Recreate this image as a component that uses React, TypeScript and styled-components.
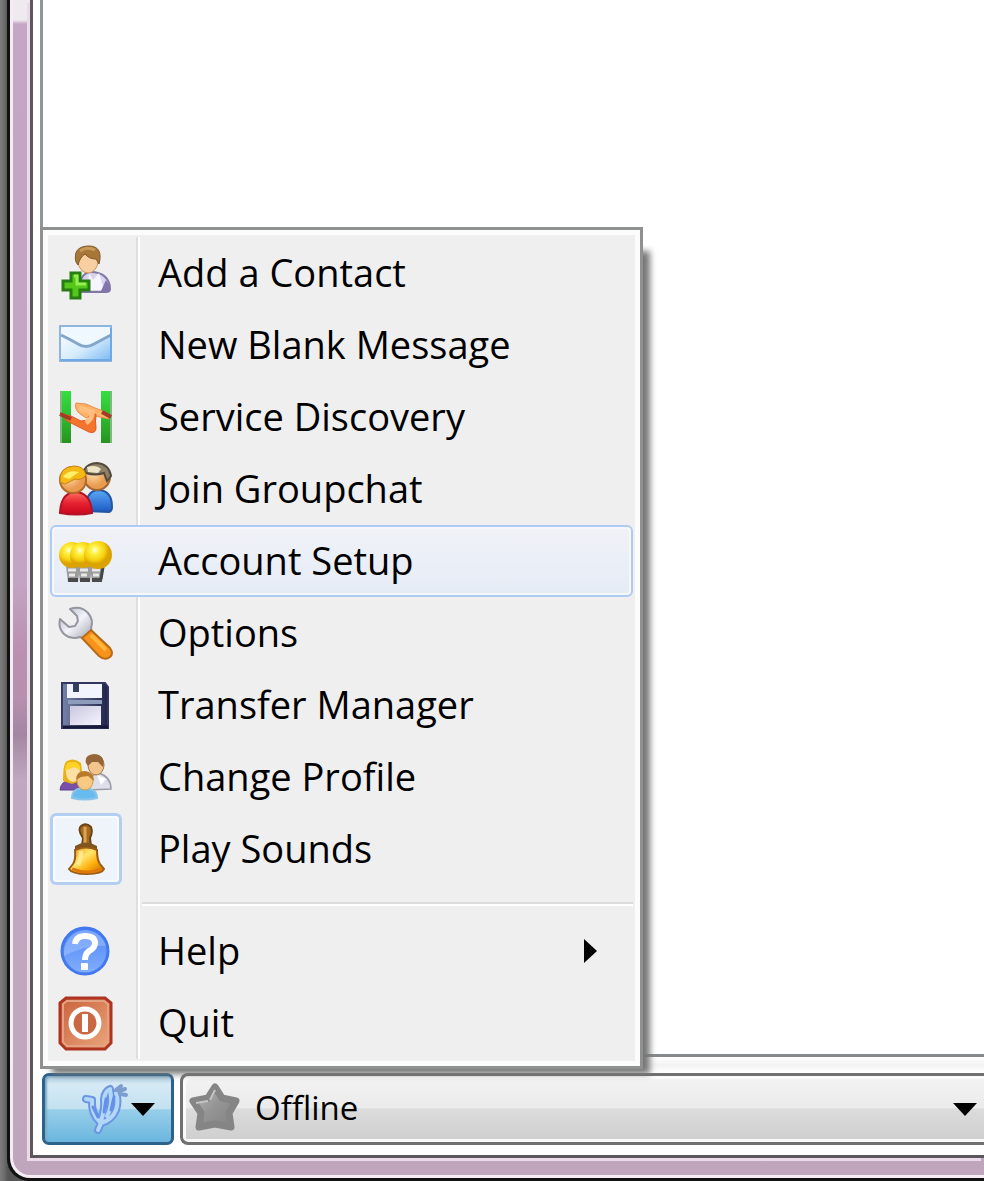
import React from 'react';
import styled, { createGlobalStyle } from 'styled-components';

const GlobalStyle = createGlobalStyle`
  * { box-sizing: border-box; }
  body { margin: 0; background: #777; overflow: hidden; }
  button, select, input { font: inherit; color: inherit; margin: 0; }
`;

const Desktop = styled.div`
  display: flex;
  min-height: 100vh;
  padding-left: 7px;
  background: linear-gradient(90deg, #7c7c7c 0, #6e6e6e 4px, #555 8px);
  font-family: 'Open Sans', 'Noto Sans', sans-serif;
  color: #000;
`;

const WindowEdge = styled.div`
  display: flex;
  flex: 1;
  min-width: 0;
  padding: 0 0 3px 3px;
  background: #111;
  border-bottom-left-radius: 22px;
`;

const WindowGlass = styled.div`
  display: flex;
  flex: 1;
  min-width: 0;
  border-left: 3px solid #f6ecf5;
  border-bottom: 3px solid #f6ecf5;
  border-bottom-left-radius: 20px;
  padding: 0 0 17px 17px;
  background:
    linear-gradient(180deg, #efe9f0 0, #efe9f0 20px, transparent 24px),
    linear-gradient(180deg, #c3a7c5 0, #c3a5c3 580px, #bb90b0 650px, #b690ae 700px, #a387a2 734px, #c0a8c0 780px, #c0a6bd 100%);
`;

const WindowBody = styled.div`
  display: flex;
  flex: 1;
  flex-direction: column;
  min-width: 0;
  border-left: 3px solid #5c575d;
  border-bottom: 3px solid #5c575d;
  padding-left: 9px;
  background: #fff;
  box-shadow: -3px 3px 0 #eadbea;
`;

const Roster = styled.main`
  flex: 1;
  border-left: 3px solid #909598;
  border-bottom: 3px solid #85898c;
  margin-left: -2px;
  background: #fff;
`;

const BottomBar = styled.footer`
  position: relative;
  display: flex;
  gap: 6px;
  padding: 16px 0 10px;
  background: linear-gradient(180deg, #fff 0, #f3f3f3 8px, #fff 16px);
`;

const MainButton = styled.button`
  display: flex;
  align-items: center;
  justify-content: flex-end;
  gap: 2px;
  width: 132px;
  height: 72px;
  padding: 0 16px 0 0;
  border: 3px solid #2d628a;
  border-radius: 7px;
  background: linear-gradient(180deg, #a5c4d8 0, #d6eaf5 8px, #c3e1f0 50%, #98cfea 51%, #6bb6df 100%);
  box-shadow: inset 2px 1px 2px #7fabc6;
`;

const StatusBox = styled.div`
  display: grid;
  flex: 1;
  align-items: center;
  min-width: 0;
  & > * { grid-area: 1 / 1; }
  & > svg { pointer-events: none; }
`;

const StatusSelect = styled.select`
  appearance: none;
  width: 100%;
  height: 72px;
  padding: 0 40px 2px 72px;
  border: 3px solid #707070;
  border-right: 0;
  border-radius: 8px 0 0 8px;
  background: linear-gradient(180deg, #f3f3f3 0, #ebebeb 48%, #dcdcdc 50%, #cecece 100%);
  box-shadow: inset 3px 3px 0 #fbfbfb, inset 0 -3px 0 #f8f8f8;
  font-size: 33px;
  line-height: 40px;
`;

const StatusIcon = styled.svg`
  width: 54px;
  height: 54px;
  margin-left: 8px;
`;

const StatusArrow = styled.svg`
  width: 24px;
  height: 13px;
  justify-self: end;
  margin-right: 7px;
`;

const MenuPopup = styled.div`
  position: absolute;
  z-index: 1;
  left: -2px;
  bottom: calc(100% - 12px);
  width: 603px;
  &::before {
    content: '';
    position: absolute;
    inset: 24px -7px -5px 12px;
    background: #777;
    filter: blur(3px);
  }
`;

const MenuPanel = styled.div`
  position: relative;
  display: flex;
  flex-direction: column;
  padding: 7px;
  border: 3px solid #8f9190;
  background: #efefef;
  box-shadow: inset 0 0 0 5px #fcfcfc;
`;

const rowBox = `
  display: grid;
  grid-template-columns: 72px 1fr auto;
  column-gap: 36px;
  align-items: center;
  height: 72px;
  padding: 0 36px 0 0;
  border: 0;
  text-align: left;
  font-size: 38px;
  line-height: 48px;
  white-space: nowrap;
`;

const MenuItem = styled.button<{ $active?: boolean }>`
  ${rowBox}
  border-radius: 6px;
  background: ${p => (p.$active ? 'linear-gradient(180deg, #f0f2f7, #e5ebf6)' : 'transparent')};
  box-shadow: ${p => (p.$active ? 'inset 0 0 0 2px #aecbf2, inset 0 0 0 4px #f4f7fc' : 'none')};
`;

const CheckItem = styled.label`
  ${rowBox}
`;

const Caption = styled.span`
  padding-bottom: 2px;
`;

const IconCell = styled.span`
  display: grid;
  place-items: center;
  & > * { grid-area: 1 / 1; }
`;

const Tick = styled.input`
  appearance: none;
  width: 72px;
  height: 72px;
  border-radius: 6px;
  &:checked {
    background: #eff3fa;
    box-shadow: inset 0 0 0 3px #b3cef1, inset 0 0 0 5px #f7faff;
  }
`;

const Glyph = styled.svg`
  width: 54px;
  height: 54px;
  overflow: visible;
  pointer-events: none;
`;

const Items = styled.div`
  display: flex;
  flex-direction: column;
  background: linear-gradient(90deg, #dedede 50%, #fff 50%) 86px 0 / 4px 100% no-repeat;
`;

const Divider = styled.hr`
  width: calc(100% - 92px);
  height: 4px;
  margin: 17px 0 9px 92px;
  border: 0;
  border-top: 2px solid #dcdcdc;
  background: #fff;
`;

const AddContact = () => (
  <Glyph viewBox="0 0 54 54">
    <path d="M20 44C20 33 25 26 32 26C43 26 51 32 51 43Q51 46 47 46H20Z" fill="#d9d3ee" stroke="#8278a8" strokeWidth="2" />
    <path d="M30 27L34 34L40 27L45 44H29Z" fill="#f6f4ff" />
    <path d="M47 34Q52 40 50 45H42Z" fill="#8175ac" />
    <ellipse cx="29" cy="15" rx="10" ry="12" fill="#f8cfa0" stroke="#c99560" />
    <path d="M17 16C14 4 21 0 30 0C40 0 43 7 40 18L37 13Q30 13 26 8Q21 11 19 19Z" fill="#a87639" stroke="#80572a" />
    <path d="M21 5Q28 0 36 4" fill="none" stroke="#c99a59" strokeWidth="3" />
    <path d="M12 27H21V35H30V44H21V52H12V44H4V35H12Z" fill="#54c719" stroke="#267d12" strokeWidth="3" />
    <path d="M15 30H18V38H27" fill="none" stroke="#96ee55" strokeWidth="3" />
  </Glyph>
);
const Message = () => (
  <Glyph viewBox="0 0 54 54">
    <defs><linearGradient id="mail" x2="1" y2="1"><stop stopColor="#fff" /><stop offset=".55" stopColor="#d6ecfd" /><stop offset="1" stopColor="#79b8f2" /></linearGradient></defs>
    <rect x="1" y="8" width="51" height="35" fill="url(#mail)" stroke="#8eb4df" strokeWidth="2" />
    <path d="M2 9H51V16L35 25Q27 30 19 25L2 16Z" fill="#f0f8ff" />
    <path d="M2 17Q14 23 19 26Q27 31 35 26L52 17" fill="none" stroke="#82a5cc" strokeWidth="3" />
    <path d="M2 42H52V10" fill="none" stroke="#6ea8e5" strokeWidth="2" />
  </Glyph>
);
const Discovery = () => (
  <Glyph viewBox="0 0 54 54">
    <defs><linearGradient id="pole" x2="0" y2="1"><stop stopColor="#35e040" /><stop offset="1" stopColor="#26941f" /></linearGradient></defs>
    <path d="M1 1H12V53H1ZM42 1H53V53H42Z" fill="url(#pole)" />
    <path d="M2 1V53M52 1V53" stroke="#82b783" strokeWidth="2" />
    <path d="M17 13L27 14L36 18L44 21L51 25L50 29L41 27L36 26L27 28L20 23Q15 18 17 13Z" fill="#ffb268" stroke="#f08b45" />
    <path d="M1 23L12 26L22 31L29 30L30 26L37 24Q36 31 37 38Q37 44 30 42L20 37L8 31Z" fill="#f4742c" stroke="#dd5a22" />
    <path d="M20 18L33 22Q34 28 27 33" fill="none" stroke="#ffbd7e" strokeWidth="5" />
    <path d="M1 24L12 29M43 22L52 27" stroke="#a23c26" strokeWidth="4" />
  </Glyph>
);
const Groupchat = () => (
  <Glyph viewBox="0 0 54 54">
    <defs>
      <radialGradient id="face" cx=".35" cy=".35"><stop stopColor="#ffe1ae" /><stop offset="1" stopColor="#e99c50" /></radialGradient>
      <linearGradient id="red" x2="0" y2="1"><stop stopColor="#ff6c60" /><stop offset=".5" stopColor="#e52230" /><stop offset="1" stopColor="#c9061d" /></linearGradient>
      <linearGradient id="blue" x2="0" y2="1"><stop stopColor="#5aaaf6" /><stop offset="1" stopColor="#1d58c4" /></linearGradient>
    </defs>
    <path d="M27 49Q26 28 40 28Q53 29 53 45Q53 49 50 50Z" fill="url(#blue)" stroke="#2456a6" strokeWidth="2" />
    <circle cx="38" cy="15" r="13" fill="url(#face)" stroke="#a06635" strokeWidth="2" />
    <path d="M25 8Q29 1 38 1Q50 2 52 14L48 19L45 11Q36 14 27 11Z" fill="#8f8168" stroke="#514a3d" strokeWidth="2" />
    <path d="M28 5Q37 2 42 7L39 11L29 10Z" fill="#eee5c9" />
    <path d="M1 51Q2 30 17 30Q32 31 33 51Q18 54 1 51Z" fill="url(#red)" stroke="#b31325" strokeWidth="2" />
    <circle cx="14" cy="18" r="13" fill="url(#face)" stroke="#b26a27" strokeWidth="2" />
    <path d="M1 20Q0 5 15 4Q25 4 27 13Q22 19 16 17L6 22Z" fill="#f6b912" stroke="#c9821b" />
    <path d="M4 15Q9 7 20 10L10 17Z" fill="#fff06a" />
  </Glyph>
);
const Accounts = () => (
  <Glyph viewBox="0 0 54 54">
    <defs><radialGradient id="bulb" cx=".38" cy=".32"><stop stopColor="#fffde0" /><stop offset=".3" stopColor="#fff143" /><stop offset=".75" stopColor="#f5cf0d" /><stop offset="1" stopColor="#dca300" /></radialGradient></defs>
    {[14, 26, 38].map(x => (
      <g key={x}>
        <path d={`M${x - 7} 32H${x + 7}L${x + 5} 48H${x - 5}Z`} fill="#9c9c9c" />
        <path d={`M${x - 5} 36H${x + 3}M${x - 4} 41H${x + 2}`} stroke="#e8e8e8" strokeWidth="3" />
        <path d={`M${x - 5} 46H${x + 5}`} stroke="#4a4a4a" strokeWidth="4" />
      </g>
    ))}
    <path d="M44 33L42 45" stroke="#444" strokeWidth="3" />
    <circle cx="13" cy="21" r="13" fill="url(#bulb)" />
    <circle cx="24" cy="21" r="13" fill="url(#bulb)" />
    <ellipse cx="39" cy="21" rx="14" ry="14" fill="url(#bulb)" />
  </Glyph>
);
const Wrench = () => (
  <Glyph viewBox="0 0 54 54">
    <defs><linearGradient id="steel" x2="1" y2="1"><stop stopColor="#aeb0ba" /><stop offset=".5" stopColor="#f3f3fa" /><stop offset="1" stopColor="#a1a3ad" /></linearGradient></defs>
    <path d="M11 3Q22-1 29 7Q35 14 32 22L33 27L27 33L21 31Q11 34 4 27Q-1 21 1 13L10 21L16 20L19 15L18 10Z" fill="url(#steel)" stroke="#94959e" strokeWidth="2" strokeLinejoin="round" />
    <path d="M32 24L51 42Q55 48 51 51Q46 55 40 50L23 32Z" fill="#f7921b" stroke="#b76a17" strokeWidth="2" />
    <path d="M32 29L47 44" stroke="#ffb43a" strokeWidth="4" />
  </Glyph>
);
const Floppy = () => (
  <Glyph viewBox="0 0 54 54">
    <defs><linearGradient id="disk" x2="1"><stop stopColor="#7683a8" /><stop offset="1" stopColor="#202448" /></linearGradient><linearGradient id="label" x2="1" y2="1"><stop stopColor="#c9c7dd" /><stop offset="1" stopColor="#f5f4ff" /></linearGradient></defs>
    <path d="M3 5H46L49 9V50H3Z" fill="url(#disk)" stroke="#32375d" strokeWidth="2" />
    <path d="M8 6H43V20H8Z" fill="#f1f4fc" />
    <path d="M14 6H20V14H14Z" fill="#34405f" />
    <path d="M9 22H43V26H9Z" fill="#8d9cba" />
    <path d="M11 28H42V47H11Z" fill="url(#label)" />
    <path d="M4 49H49" stroke="#171a3a" strokeWidth="3" />
  </Glyph>
);
const Profile = () => (
  <Glyph viewBox="0 0 54 54">
    <path d="M29 40Q30 23 40 23Q52 27 52 39Z" fill="#dfdfe9" stroke="#9d9ba8" strokeWidth="1.5" />
    <path d="M38 25L42 35L47 29" fill="#fff" />
    <ellipse cx="37" cy="15" rx="8" ry="10" fill="#f4c48e" stroke="#a47542" />
    <path d="M27 13Q25 5 35 4Q47 5 44 17L39 12L33 12L29 16Z" fill="#946638" />
    <path d="M1 40Q2 30 13 30Q22 31 23 40Z" fill="#7850a8" stroke="#5d408b" />
    <path d="M4 31Q4 13 8 11Q15 7 22 13L24 30L13 34Z" fill="#e8af16" />
    <ellipse cx="14" cy="22" rx="7" ry="10" fill="#ffe0a4" />
    <path d="M6 21Q6 10 16 12Q22 14 21 20L15 17Z" fill="#ffd326" />
    <path d="M13 48Q13 38 26 38Q38 39 38 48Q26 51 13 48Z" fill="#67bbf0" stroke="#89c4e8" strokeWidth="2" />
    <ellipse cx="26" cy="31" rx="8" ry="9" fill="#f8c982" stroke="#cf9d53" />
    <path d="M17 30Q17 21 26 21Q35 22 35 31L29 26L22 27Z" fill="#b97a2c" />
  </Glyph>
);
const Bell = () => (
  <Glyph viewBox="0 0 54 54">
    <defs><linearGradient id="bell" x2="1" y2="1"><stop stopColor="#e99412" /><stop offset=".4" stopColor="#ffe56b" /><stop offset=".65" stopColor="#ffae0b" /><stop offset="1" stopColor="#bd5e06" /></linearGradient></defs>
    <path d="M23 24L24 16Q18 7 22 4Q27 0 32 5Q34 10 31 16L32 24Z" fill="#a46b24" stroke="#684315" strokeWidth="2" />
    <path d="M26 5V21" stroke="#dda64c" strokeWidth="3" />
    <path d="M16 24Q27 17 38 24V29H16Z" fill="#80541d" />
    <path d="M16 28Q27 23 38 28Q38 38 41 42L45 47Q43 52 28 52Q13 52 10 47L14 42Q17 38 16 28Z" fill="url(#bell)" stroke="#9a5c14" strokeWidth="2" />
    <path d="M13 47Q28 53 43 47" fill="none" stroke="#dc7907" strokeWidth="3" />
    <path d="M22 29Q22 37 19 43" fill="none" stroke="#ffe98f" strokeWidth="4" />
  </Glyph>
);
const HelpIcon = () => (
  <Glyph viewBox="0 0 54 54">
    <defs><linearGradient id="help" x2="0" y2="1"><stop stopColor="#4b83f3" /><stop offset="1" stopColor="#83b0ff" /></linearGradient></defs>
    <circle cx="26" cy="27" r="23" fill="url(#help)" stroke="#4279ee" strokeWidth="3" />
    <path d="M5 27Q8 8 26 6Q42 7 47 22Q29 20 5 32Z" fill="#a8c5ff" opacity=".5" />
    <path d="M16 20Q17 12 26 12Q36 12 36 19Q36 24 30 27Q26 30 26 36" fill="none" stroke="#fff" strokeWidth="6" />
    <rect x="22" y="39" width="7" height="7" rx="1" fill="#fff" />
  </Glyph>
);
const QuitIcon = () => (
  <Glyph viewBox="0 0 54 54">
    <defs><linearGradient id="quit" x2="1" y2="1"><stop stopColor="#c9613c" /><stop offset="1" stopColor="#eba77c" /></linearGradient></defs>
    <path d="M7 2H46L52 7V47L46 53H7L1 47V7Z" fill="url(#quit)" stroke="#ae3420" strokeWidth="3" />
    <path d="M8 5H45L49 8V46L45 50H8L4 46V8Z" fill="none" stroke="#e4a284" strokeWidth="2" />
    <circle cx="26" cy="27" r="14" fill="#ca6844" stroke="#fff" strokeWidth="5" />
    <path d="M26 18V36" stroke="#fff" strokeWidth="6" />
  </Glyph>
);
const Logo = () => (
  <svg width="48" height="54" viewBox="0 0 48 54" aria-hidden="true">
    <g fill="none" strokeLinecap="round" strokeLinejoin="round">
      <path d="M5 17L11 18Q10 32 19 40M17 48L20 41Q31 38 35 28Q38 19 35 11M20 39Q24 27 23 17Q24 9 29 7L30 15Q31 25 26 34" stroke="#6b96e4" strokeWidth="8" />
      <path d="M5 17L11 18Q10 32 19 40M17 48L20 41Q31 38 35 28Q38 19 35 11M20 39Q24 27 23 17Q24 9 29 7L30 15Q31 25 26 34" stroke="#b3d7f7" strokeWidth="4" />
      <path d="M35 8L40 4M38 9L44 7M39 12L45 13" stroke="#7e9cd0" strokeWidth="4" />
      <path d="M25 17L23 30M33 15L30 28M12 25L17 35" stroke="#6490ea" strokeWidth="3" />
    </g>
  </svg>
);

const entries = [
  { label: 'Add a Contact', Icon: AddContact },
  { label: 'New Blank Message', Icon: Message },
  { label: 'Service Discovery', Icon: Discovery },
  { label: 'Join Groupchat', Icon: Groupchat },
  { label: 'Account Setup', Icon: Accounts, active: true },
  { label: 'Options', Icon: Wrench },
  { label: 'Transfer Manager', Icon: Floppy },
  { label: 'Change Profile', Icon: Profile },
];

export default function App() {
  return (
    <>
      <GlobalStyle />
      <Desktop>
        <WindowEdge>
          <WindowGlass>
            <WindowBody>
              <Roster />
              <BottomBar>
                <MenuPopup>
                  <MenuPanel>
                    <Items>
                      {entries.map(({ label, Icon, active }) => (
                        <MenuItem key={label} type="button" $active={active}>
                          <IconCell><Icon /></IconCell>
                          <Caption>{label}</Caption>
                        </MenuItem>
                      ))}
                      <CheckItem>
                        <IconCell>
                          <Tick type="checkbox" defaultChecked />
                          <Bell />
                        </IconCell>
                        <Caption>Play Sounds</Caption>
                      </CheckItem>
                      <Divider />
                      <MenuItem type="button" aria-haspopup="menu">
                        <IconCell><HelpIcon /></IconCell>
                        <Caption>Help</Caption>
                        <svg width="13" height="24" viewBox="0 0 13 24" aria-hidden="true"><path d="M0 0L13 12L0 24Z" /></svg>
                      </MenuItem>
                      <MenuItem type="button">
                        <IconCell><QuitIcon /></IconCell>
                        <Caption>Quit</Caption>
                      </MenuItem>
                    </Items>
                  </MenuPanel>
                </MenuPopup>
                <MainButton type="button" aria-label="Main menu" aria-expanded="true">
                  <Logo />
                  <svg width="24" height="13" viewBox="0 0 24 13" aria-hidden="true"><path d="M0 0H24L12 13Z" /></svg>
                </MainButton>
                <StatusBox>
                  <StatusSelect aria-label="Status" defaultValue="Offline">
                    <option>Offline</option>
                  </StatusSelect>
                  <StatusIcon viewBox="0 0 54 54" aria-hidden="true">
                    <defs><linearGradient id="star" x2="1" y2="1"><stop stopColor="#bcbcbc" /><stop offset=".5" stopColor="#949494" /><stop offset="1" stopColor="#828282" /></linearGradient></defs>
                    <path d="M27 5L34 16L48 19L41 31L43 45L27 42L11 45L13 31L5 19L20 16Z" fill="url(#star)" stroke="#858585" strokeWidth="7" strokeLinejoin="round" />
                    <path d="M20 19L8 21M27 8L22 18" stroke="#c5c5c5" strokeWidth="2" />
                  </StatusIcon>
                  <StatusArrow viewBox="0 0 24 13" aria-hidden="true"><path d="M0 0H24L12 13Z" /></StatusArrow>
                </StatusBox>
              </BottomBar>
            </WindowBody>
          </WindowGlass>
        </WindowEdge>
      </Desktop>
    </>
  );
}
